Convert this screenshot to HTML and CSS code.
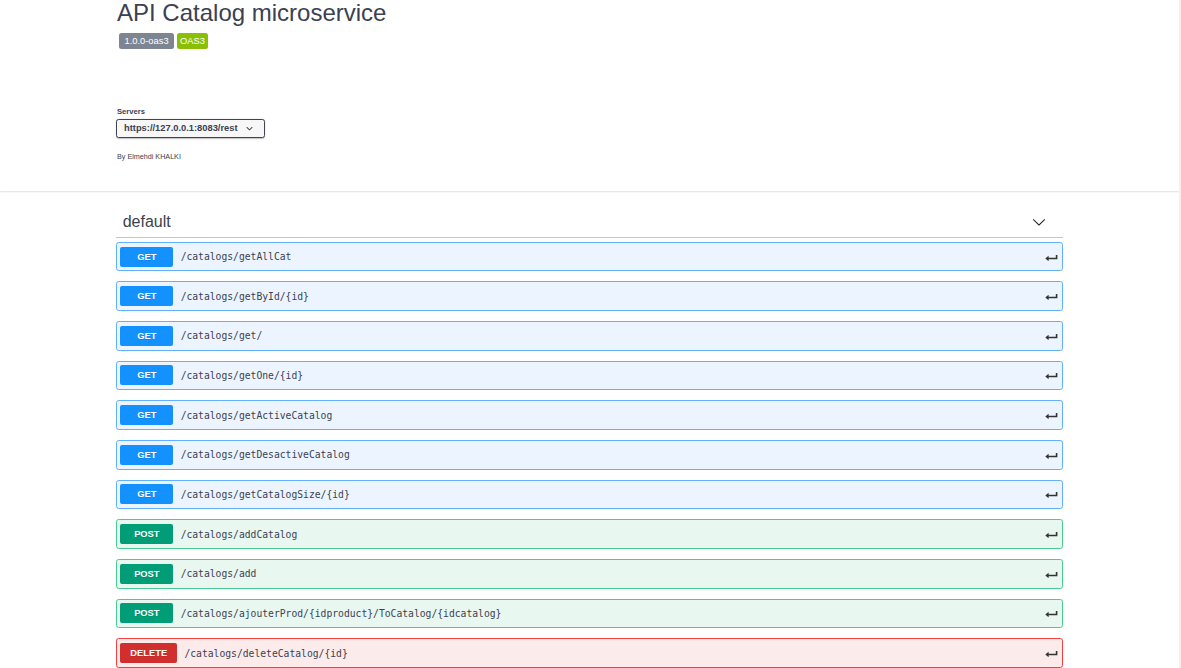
FILE: index.html
```html
<!DOCTYPE html>
<html lang="en">
<head>
<meta charset="utf-8">
<title>API Catalog microservice</title>
<link rel="stylesheet" href="styles.css">
</head>
<body>
<div class="page">
  <div class="main">
    <section class="top">
      <div class="wrap">
        <h1 class="title">API Catalog microservice</h1>
        <div class="badges">
          <span class="badge badge-ver">1.0.0-oas3</span>
          <span class="badge badge-oas">OAS3</span>
        </div>
        <div class="servers">
          <div class="servers-title">Servers</div>
          <div class="select">
            <span>https://127.0.0.1:8083/rest</span>
            <svg class="select-arrow" viewBox="0 0 20 20" width="13" height="13"><path d="M13.418 7.859a.695.695 0 01.978 0 .68.68 0 010 .969l-3.908 3.830a.697.697 0 01-.979 0l-3.908-3.830a.68.68 0 010-.969.695.695 0 01.978 0L10 11l3.418-3.141z" fill="#3b4151"/></svg>
          </div>
        </div>
        <div class="author">By Elmehdi KHALKI</div>
      </div>
    </section>

    <section class="wrap ops">
      <div class="tag">
        <span class="tag-name">default</span>
        <svg class="tag-arrow" viewBox="0 0 20 20" width="14" height="14"><path d="M17.418 6.109c.272-.268.709-.268.979 0s.271.701 0 .969l-7.908 7.830c-.27.268-.707.268-.979 0l-7.908-7.830c-.27-.268-.27-.701 0-.969.271-.268.709-.268.979 0L10 13.25l7.418-7.141z" fill="#222"/></svg>
      </div>

      <div class="op get"><span class="method">GET</span><span class="path">/catalogs/getAllCat</span><svg class="ret" viewBox="0 0 13 7" width="13" height="7"><path d="M3 4.5H11.6V1" fill="none" stroke="#333" stroke-width="1.6"/><path d="M0.3 4.5L3.6 1.8V7.2z" fill="#333"/></svg></div>
      <div class="op get"><span class="method">GET</span><span class="path">/catalogs/getById/{id}</span><svg class="ret" viewBox="0 0 13 7" width="13" height="7"><path d="M3 4.5H11.6V1" fill="none" stroke="#333" stroke-width="1.6"/><path d="M0.3 4.5L3.6 1.8V7.2z" fill="#333"/></svg></div>
      <div class="op get"><span class="method">GET</span><span class="path">/catalogs/get/</span><svg class="ret" viewBox="0 0 13 7" width="13" height="7"><path d="M3 4.5H11.6V1" fill="none" stroke="#333" stroke-width="1.6"/><path d="M0.3 4.5L3.6 1.8V7.2z" fill="#333"/></svg></div>
      <div class="op get"><span class="method">GET</span><span class="path">/catalogs/getOne/{id}</span><svg class="ret" viewBox="0 0 13 7" width="13" height="7"><path d="M3 4.5H11.6V1" fill="none" stroke="#333" stroke-width="1.6"/><path d="M0.3 4.5L3.6 1.8V7.2z" fill="#333"/></svg></div>
      <div class="op get"><span class="method">GET</span><span class="path">/catalogs/getActiveCatalog</span><svg class="ret" viewBox="0 0 13 7" width="13" height="7"><path d="M3 4.5H11.6V1" fill="none" stroke="#333" stroke-width="1.6"/><path d="M0.3 4.5L3.6 1.8V7.2z" fill="#333"/></svg></div>
      <div class="op get"><span class="method">GET</span><span class="path">/catalogs/getDesactiveCatalog</span><svg class="ret" viewBox="0 0 13 7" width="13" height="7"><path d="M3 4.5H11.6V1" fill="none" stroke="#333" stroke-width="1.6"/><path d="M0.3 4.5L3.6 1.8V7.2z" fill="#333"/></svg></div>
      <div class="op get"><span class="method">GET</span><span class="path">/catalogs/getCatalogSize/{id}</span><svg class="ret" viewBox="0 0 13 7" width="13" height="7"><path d="M3 4.5H11.6V1" fill="none" stroke="#333" stroke-width="1.6"/><path d="M0.3 4.5L3.6 1.8V7.2z" fill="#333"/></svg></div>
      <div class="op post"><span class="method">POST</span><span class="path">/catalogs/addCatalog</span><svg class="ret" viewBox="0 0 13 7" width="13" height="7"><path d="M3 4.5H11.6V1" fill="none" stroke="#333" stroke-width="1.6"/><path d="M0.3 4.5L3.6 1.8V7.2z" fill="#333"/></svg></div>
      <div class="op post"><span class="method">POST</span><span class="path">/catalogs/add</span><svg class="ret" viewBox="0 0 13 7" width="13" height="7"><path d="M3 4.5H11.6V1" fill="none" stroke="#333" stroke-width="1.6"/><path d="M0.3 4.5L3.6 1.8V7.2z" fill="#333"/></svg></div>
      <div class="op post"><span class="method">POST</span><span class="path">/catalogs/ajouterProd/{idproduct}/ToCatalog/{idcatalog}</span><svg class="ret" viewBox="0 0 13 7" width="13" height="7"><path d="M3 4.5H11.6V1" fill="none" stroke="#333" stroke-width="1.6"/><path d="M0.3 4.5L3.6 1.8V7.2z" fill="#333"/></svg></div>
      <div class="op delete"><span class="method">DELETE</span><span class="path">/catalogs/deleteCatalog/{id}</span><svg class="ret" viewBox="0 0 13 7" width="13" height="7"><path d="M3 4.5H11.6V1" fill="none" stroke="#333" stroke-width="1.6"/><path d="M0.3 4.5L3.6 1.8V7.2z" fill="#333"/></svg></div>
    </section>
  </div>
  <div class="edge"></div>
</div>
</body>
</html>
```

FILE: styles.css
```css
html, body {
  margin: 0;
  padding: 0;
  background: #fff;
}
body {
  font-family: "Liberation Sans", Arial, sans-serif;
  color: #3b4151;
  overflow: hidden;
}
.page {
  display: flex;
  min-height: 668px;
}
.main {
  flex: 1;
  min-width: 0;
}
.edge {
  width: 2px;
  background: #f1f1f1;
}
.wrap {
  width: 947px;
  margin: 0 auto;
}
.top {
  height: 191px;
  box-shadow: 0 1px 1.5px 0 rgba(0, 0, 0, 0.13);
  margin-bottom: 13px;
}
.title {
  margin: 0;
  padding-left: 1px;
  font-size: 24px;
  line-height: 26px;
  font-weight: 400;
  color: #3b4151;
}
.badges {
  display: flex;
  gap: 3px;
  margin: 7px 0 0 3px;
}
.badge {
  display: inline-block;
  height: 16px;
  line-height: 16px;
  font-size: 9.33px;
  color: #fff;
  border-radius: 2.5px;
}
.badge-ver {
  background: #7d8492;
  padding: 0 5.5px;
}
.badge-oas {
  background: #89bf04;
  padding: 0 3px;
}
.servers {
  margin-top: 58px;
}
.servers-title {
  font-size: 7.6px;
  font-weight: 700;
  line-height: 10px;
  padding-left: 1px;
  color: #3b4151;
}
.select {
  display: inline-flex;
  align-items: center;
  justify-content: space-between;
  box-sizing: border-box;
  width: 149px;
  height: 18.5px;
  margin-top: 2px;
  padding: 0 8px 0 7px;
  border: 1.33px solid #41444e;
  border-radius: 2.67px;
  background: #f7f7f7;
  box-shadow: 0 0.67px 1.33px 0 rgba(0, 0, 0, 0.25);
  font-size: 9.33px;
  font-weight: 700;
  color: #3b4151;
}
.select-arrow {
  flex: none;
}
.author {
  margin-top: 14px;
  padding-left: 1px;
  font-size: 7.2px;
  line-height: 10px;
  color: #3b4151;
}
.ops {
  display: flex;
  flex-direction: column;
}
.tag {
  display: flex;
  align-items: center;
  justify-content: space-between;
  height: 20px;
  padding: 7.7px 17px 5.7px 6.67px;
  border-bottom: 1px solid rgba(59, 65, 81, 0.3);
  margin-bottom: 3.3px;
}
.tag-name {
  font-size: 16px;
  line-height: 20px;
  color: #3b4151;
}
.op {
  display: flex;
  align-items: center;
  box-sizing: border-box;
  height: 29.67px;
  margin-bottom: 10px;
  padding: 0 4px 0 3.33px;
  border: 1px solid;
  border-radius: 2.67px;
}
.method {
  box-sizing: border-box;
  min-width: 53px;
  height: 20px;
  line-height: 20px;
  padding: 0 10px;
  border-radius: 2px;
  text-align: center;
  font-size: 9.33px;
  font-weight: 700;
  color: #fff;
  text-shadow: 0 0.67px 0 rgba(0, 0, 0, 0.1);
}
.path {
  flex: 1;
  padding-left: 7.3px;
  font-family: "DejaVu Sans Mono", "Liberation Mono", monospace;
  font-size: 9.7px;
  color: #3b4151;
}
.ret {
  flex: none;
  margin-top: 1px;
}
.get {
  background: #ecf5ff;
  border-color: #61affe;
}
.get .method {
  background: #1391ff;
}
.post {
  background: #e9f7f1;
  border-color: #49cc90;
}
.post .method {
  background: #009d77;
}
.delete {
  background: #fbebeb;
  border-color: #f93e3e;
}
.delete .method {
  background: #d12e2e;
}
```
